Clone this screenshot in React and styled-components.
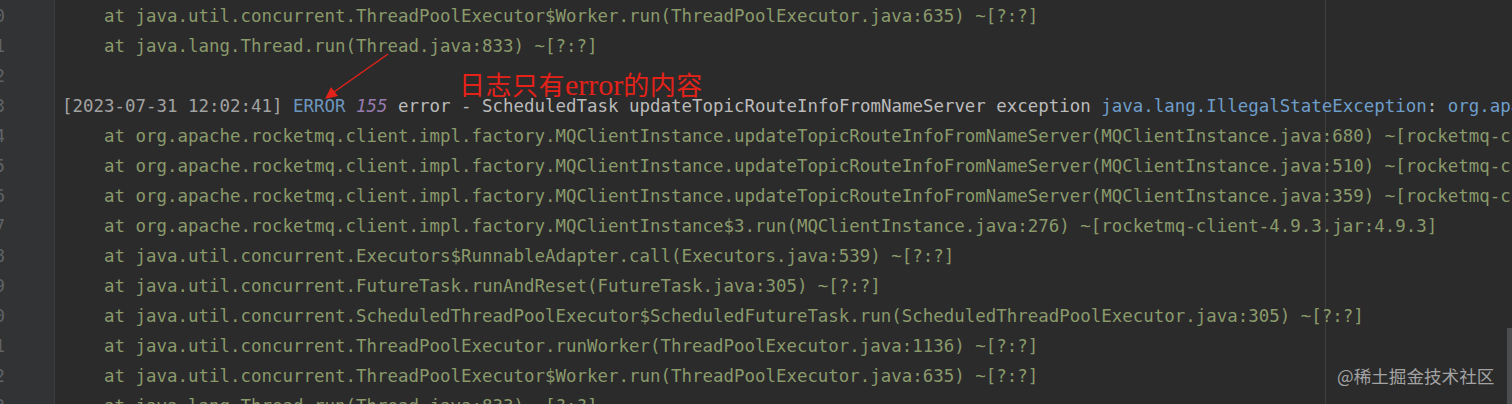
import styled, { createGlobalStyle } from "styled-components";

const GlobalStyle = createGlobalStyle`
    body {
        margin: 0;
        background: #2b2b2b;
    }
`;

const Editor = styled.div`
    position: relative;
    display: flex;
    width: 1512px;
    height: 404px;
    overflow: hidden;
    background: #2b2b2b;
    font-family: "DejaVu Sans Mono", "Liberation Mono", monospace;
    font-size: 17.45px;
`;

const Gutter = styled.div`
    width: 54px;
    flex-shrink: 0;
    padding-top: 1px;
    background: #313335;
    border-right: 1px solid #3b3d3f;
`;

const LineNo = styled.div`
    display: flex;
    justify-content: flex-end;
    width: 5px;
    height: 30px;
    line-height: 30px;
    overflow: hidden;
    color: #5f6366;
`;

const Code = styled.div`
    flex: 1;
    padding: 1px 0 0 7px;
    background-image: linear-gradient(#3e3e3e, #3e3e3e);
    background-size: 1px 100%;
    background-position: 1270px 0;
    background-repeat: no-repeat;
`;

const Line = styled.div`
    height: 30px;
    line-height: 30px;
    white-space: pre;
    color: ${(p) => p.$color || "#8a9a6b"};
`;

const Tok = styled.span`
    color: ${(p) => p.$color};
    font-style: ${(p) => (p.$italic ? "italic" : "normal")};
`;

const Note = styled.div`
    position: absolute;
    left: 459px;
    top: 69px;
    color: #e3221a;
    font-size: 26px;
    line-height: 32px;
    letter-spacing: 0.5px;
    font-family: "Liberation Serif", "Noto Sans CJK SC", serif;
    white-space: nowrap;
`;

const NoteLatin = styled.span`
    font-size: 30px;
    letter-spacing: 0;
`;

const Arrow = styled.svg`
    position: absolute;
    left: 0;
    top: 0;
    pointer-events: none;
`;

const Watermark = styled.div`
    position: absolute;
    left: 1337px;
    top: 363px;
    color: #a3a3a3;
    font-size: 17.6px;
    line-height: 26px;
    font-family: "Noto Sans CJK SC", "Noto Sans", sans-serif;
    white-space: nowrap;
`;

const ScrollThumb = styled.div`
    position: absolute;
    right: 0;
    top: 328px;
    width: 5px;
    height: 76px;
    background: #4b4d4f;
`;

const stack = [
    "    at java.util.concurrent.ThreadPoolExecutor$Worker.run(ThreadPoolExecutor.java:635) ~[?:?]",
    "    at java.lang.Thread.run(Thread.java:833) ~[?:?]",
    "",
    null,
    "    at org.apache.rocketmq.client.impl.factory.MQClientInstance.updateTopicRouteInfoFromNameServer(MQClientInstance.java:680) ~[rocketmq-client-4.9.3.jar:4.9.3]",
    "    at org.apache.rocketmq.client.impl.factory.MQClientInstance.updateTopicRouteInfoFromNameServer(MQClientInstance.java:510) ~[rocketmq-client-4.9.3.jar:4.9.3]",
    "    at org.apache.rocketmq.client.impl.factory.MQClientInstance.updateTopicRouteInfoFromNameServer(MQClientInstance.java:359) ~[rocketmq-client-4.9.3.jar:4.9.3]",
    "    at org.apache.rocketmq.client.impl.factory.MQClientInstance$3.run(MQClientInstance.java:276) ~[rocketmq-client-4.9.3.jar:4.9.3]",
    "    at java.util.concurrent.Executors$RunnableAdapter.call(Executors.java:539) ~[?:?]",
    "    at java.util.concurrent.FutureTask.runAndReset(FutureTask.java:305) ~[?:?]",
    "    at java.util.concurrent.ScheduledThreadPoolExecutor$ScheduledFutureTask.run(ScheduledThreadPoolExecutor.java:305) ~[?:?]",
    "    at java.util.concurrent.ThreadPoolExecutor.runWorker(ThreadPoolExecutor.java:1136) ~[?:?]",
    "    at java.util.concurrent.ThreadPoolExecutor$Worker.run(ThreadPoolExecutor.java:635) ~[?:?]",
    "    at java.lang.Thread.run(Thread.java:833) ~[?:?]",
];

export default function App() {
    return (
        <>
            <GlobalStyle />
            <Editor>
                <Gutter>
                    {stack.map((_, i) => (
                        <LineNo key={i}>{2550 + i}</LineNo>
                    ))}
                </Gutter>
                <Code>
                    {stack.map((text, i) =>
                        text === null ? (
                            <Line key={i}>
                                <Tok $color="#a2a2a2">[2023-07-31 12:02:41] </Tok>
                                <Tok $color="#6d96bd">ERROR </Tok>
                                <Tok $color="#9a7bb0" $italic>155 </Tok>
                                <Tok $color="#bbbbbb">error - ScheduledTask updateTopicRouteInfoFromNameServer exception </Tok>
                                <Tok $color="#6e9dca">java.lang.IllegalStateException</Tok>
                                <Tok $color="#bbbbbb">: </Tok>
                                <Tok $color="#6e9dca">org.apache.rocketmq.client.exception.MQClientException</Tok>
                            </Line>
                        ) : (
                            <Line key={i}>{text}</Line>
                        )
                    )}
                </Code>

                <Note>
                    日志只有<NoteLatin>error</NoteLatin>的内容
                </Note>

                <Arrow width="1512" height="404">
                    <line x1="388" y1="54" x2="334" y2="92" stroke="#e3221a" strokeWidth="1.5" />
                    <polygon points="325,99 331,87 338,96" fill="#e3221a" />
                </Arrow>

                <Watermark>@稀土掘金技术社区</Watermark>
                <ScrollThumb />
            </Editor>
        </>
    );
}
